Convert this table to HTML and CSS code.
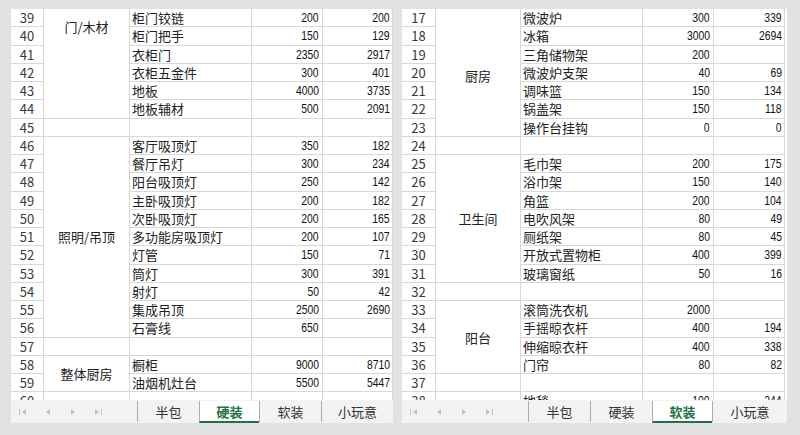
FILE: index.html
```html
<!DOCTYPE html>
<html lang="zh">
<head>
<meta charset="utf-8">
<title>装修预算</title>
<link rel="stylesheet" href="styles.css">
</head>
<body>
<div class="desk">
  <section class="panel panel-left">
    <div class="sheet">
      <div class="grid">
        <div class="c n">39</div><div class="c g span6 g-top">门/木材</div><div class="c i">柜门铰链</div><div class="c b"><span>200</span></div><div class="c a"><span>200</span></div>
        <div class="c n">40</div><div class="c i">柜门把手</div><div class="c b"><span>150</span></div><div class="c a"><span>129</span></div>
        <div class="c n">41</div><div class="c i">衣柜门</div><div class="c b"><span>2350</span></div><div class="c a"><span>2917</span></div>
        <div class="c n">42</div><div class="c i">衣柜五金件</div><div class="c b"><span>300</span></div><div class="c a"><span>401</span></div>
        <div class="c n">43</div><div class="c i">地板</div><div class="c b"><span>4000</span></div><div class="c a"><span>3735</span></div>
        <div class="c n">44</div><div class="c i">地板辅材</div><div class="c b"><span>500</span></div><div class="c a"><span>2091</span></div>
        <div class="c n">45</div><div class="c g"></div><div class="c i"></div><div class="c b"></div><div class="c a"></div>
        <div class="c n">46</div><div class="c g span11">照明/吊顶</div><div class="c i">客厅吸顶灯</div><div class="c b"><span>350</span></div><div class="c a"><span>182</span></div>
        <div class="c n">47</div><div class="c i">餐厅吊灯</div><div class="c b"><span>300</span></div><div class="c a"><span>234</span></div>
        <div class="c n">48</div><div class="c i">阳台吸顶灯</div><div class="c b"><span>250</span></div><div class="c a"><span>142</span></div>
        <div class="c n">49</div><div class="c i">主卧吸顶灯</div><div class="c b"><span>200</span></div><div class="c a"><span>182</span></div>
        <div class="c n">50</div><div class="c i">次卧吸顶灯</div><div class="c b"><span>200</span></div><div class="c a"><span>165</span></div>
        <div class="c n">51</div><div class="c i">多功能房吸顶灯</div><div class="c b"><span>200</span></div><div class="c a"><span>107</span></div>
        <div class="c n">52</div><div class="c i">灯管</div><div class="c b"><span>150</span></div><div class="c a"><span>71</span></div>
        <div class="c n">53</div><div class="c i">筒灯</div><div class="c b"><span>300</span></div><div class="c a"><span>391</span></div>
        <div class="c n">54</div><div class="c i">射灯</div><div class="c b"><span>50</span></div><div class="c a"><span>42</span></div>
        <div class="c n">55</div><div class="c i">集成吊顶</div><div class="c b"><span>2500</span></div><div class="c a"><span>2690</span></div>
        <div class="c n">56</div><div class="c i">石膏线</div><div class="c b"><span>650</span></div><div class="c a"></div>
        <div class="c n">57</div><div class="c g"></div><div class="c i"></div><div class="c b"></div><div class="c a"></div>
        <div class="c n">58</div><div class="c g span2">整体厨房</div><div class="c i">橱柜</div><div class="c b"><span>9000</span></div><div class="c a"><span>8710</span></div>
        <div class="c n">59</div><div class="c i">油烟机灶台</div><div class="c b"><span>5500</span></div><div class="c a"><span>5447</span></div>
        <div class="c n">60</div><div class="c g"></div><div class="c i"></div><div class="c b"></div><div class="c a"></div>
      </div>
    </div>
    <div class="tabs">
      <div class="nav">
        <svg class="arrow" viewBox="0 0 8 8"><rect x="0" y="1" width="1" height="6"/><path d="M7 1 L3 4 L7 7Z"/></svg>
        <svg class="arrow" viewBox="0 0 8 8"><path d="M6 1 L2 4 L6 7Z"/></svg>
        <svg class="arrow" viewBox="0 0 8 8"><path d="M2 1 L6 4 L2 7Z"/></svg>
        <svg class="arrow" viewBox="0 0 8 8"><path d="M1 1 L5 4 L1 7Z"/><rect x="7" y="1" width="1" height="6"/></svg>
      </div>
      <div class="tab">半包</div>
      <div class="tab tab-active">硬装</div>
      <div class="tab">软装</div>
      <div class="tab tab-last">小玩意</div>
    </div>
  </section>

  <section class="panel panel-right">
    <div class="sheet">
      <div class="grid">
        <div class="c n">17</div><div class="c g span7 g-low">厨房</div><div class="c i">微波炉</div><div class="c b"><span>300</span></div><div class="c a"><span>339</span></div>
        <div class="c n">18</div><div class="c i">冰箱</div><div class="c b"><span>3000</span></div><div class="c a"><span>2694</span></div>
        <div class="c n">19</div><div class="c i">三角储物架</div><div class="c b"><span>200</span></div><div class="c a"></div>
        <div class="c n">20</div><div class="c i">微波炉支架</div><div class="c b"><span>40</span></div><div class="c a"><span>69</span></div>
        <div class="c n">21</div><div class="c i">调味篮</div><div class="c b"><span>150</span></div><div class="c a"><span>134</span></div>
        <div class="c n">22</div><div class="c i">锅盖架</div><div class="c b"><span>150</span></div><div class="c a"><span>118</span></div>
        <div class="c n">23</div><div class="c i">操作台挂钩</div><div class="c b"><span>0</span></div><div class="c a"><span>0</span></div>
        <div class="c n">24</div><div class="c g"></div><div class="c i"></div><div class="c b"></div><div class="c a"></div>
        <div class="c n">25</div><div class="c g span7">卫生间</div><div class="c i">毛巾架</div><div class="c b"><span>200</span></div><div class="c a"><span>175</span></div>
        <div class="c n">26</div><div class="c i">浴巾架</div><div class="c b"><span>150</span></div><div class="c a"><span>140</span></div>
        <div class="c n">27</div><div class="c i">角篮</div><div class="c b"><span>200</span></div><div class="c a"><span>104</span></div>
        <div class="c n">28</div><div class="c i">电吹风架</div><div class="c b"><span>80</span></div><div class="c a"><span>49</span></div>
        <div class="c n">29</div><div class="c i">厕纸架</div><div class="c b"><span>80</span></div><div class="c a"><span>45</span></div>
        <div class="c n">30</div><div class="c i">开放式置物柜</div><div class="c b"><span>400</span></div><div class="c a"><span>399</span></div>
        <div class="c n">31</div><div class="c i">玻璃窗纸</div><div class="c b"><span>50</span></div><div class="c a"><span>16</span></div>
        <div class="c n">32</div><div class="c g"></div><div class="c i"></div><div class="c b"></div><div class="c a"></div>
        <div class="c n">33</div><div class="c g span4">阳台</div><div class="c i">滚筒洗衣机</div><div class="c b"><span>2000</span></div><div class="c a"></div>
        <div class="c n">34</div><div class="c i">手摇晾衣杆</div><div class="c b"><span>400</span></div><div class="c a"><span>194</span></div>
        <div class="c n">35</div><div class="c i">伸缩晾衣杆</div><div class="c b"><span>400</span></div><div class="c a"><span>338</span></div>
        <div class="c n">36</div><div class="c i">门帘</div><div class="c b"><span>80</span></div><div class="c a"><span>82</span></div>
        <div class="c n">37</div><div class="c g"></div><div class="c i"></div><div class="c b"></div><div class="c a"></div>
        <div class="c n">38</div><div class="c g"></div><div class="c i">地毯</div><div class="c b"><span>100</span></div><div class="c a"><span>244</span></div>
      </div>
    </div>
    <div class="tabs">
      <div class="nav">
        <svg class="arrow" viewBox="0 0 8 8"><rect x="0" y="1" width="1" height="6"/><path d="M7 1 L3 4 L7 7Z"/></svg>
        <svg class="arrow" viewBox="0 0 8 8"><path d="M6 1 L2 4 L6 7Z"/></svg>
        <svg class="arrow" viewBox="0 0 8 8"><path d="M2 1 L6 4 L2 7Z"/></svg>
        <svg class="arrow" viewBox="0 0 8 8"><path d="M1 1 L5 4 L1 7Z"/><rect x="7" y="1" width="1" height="6"/></svg>
      </div>
      <div class="tab">半包</div>
      <div class="tab">硬装</div>
      <div class="tab tab-active">软装</div>
      <div class="tab tab-last">小玩意</div>
    </div>
  </section>
</div>
</body>
</html>
```

FILE: styles.css
```css
html, body {
  margin: 0;
  padding: 0;
}

body {
  width: 800px;
  height: 435px;
  overflow: hidden;
  background: #e2e2e2;
  font-family: "Noto Sans CJK SC", "Noto Sans", sans-serif;
  color: #222;
}

.desk {
  display: flex;
  gap: 9px;
  padding: 9px 0 0 11px;
}

.panel {
  display: flex;
  flex-direction: column;
  background: #fff;
}

.panel-left { width: 382px; }
.panel-right { width: 385px; }

.sheet {
  height: 391px;
  overflow: hidden;
}

.grid {
  display: grid;
  grid-auto-rows: 18.25px;
}

.panel-left .grid { grid-template-columns: 33px 86px 122px 71px 70px; }
.panel-right .grid { grid-template-columns: 34px 85px 122px 71px 71px; }

.c {
  box-sizing: border-box;
  border-right: 1px solid #d8d8d8;
  border-bottom: 1px solid #d8d8d8;
  line-height: 17px;
  white-space: nowrap;
}

.n {
  grid-column: 1;
  text-align: center;
  font-size: 13px;
  color: #3a3a3a;
}

.g {
  grid-column: 2;
  display: flex;
  align-items: center;
  justify-content: center;
  font-size: 13px;
}

.g-top {
  align-items: flex-start;
  padding-top: 9px;
}

.g-low { padding-top: 7px; }

.span2 { grid-row: span 2; }
.span4 { grid-row: span 4; }
.span6 { grid-row: span 6; }
.span7 { grid-row: span 7; }
.span11 { grid-row: span 11; }

.i {
  grid-column: 3;
  padding-left: 2px;
  font-size: 13px;
}

.b, .a {
  text-align: right;
  font-family: "Liberation Sans", Arial, sans-serif;
  font-size: 13.5px;
  color: #111;
}

.b span, .a span {
  display: inline-block;
  transform: scaleX(0.77);
  transform-origin: right center;
}

.b { grid-column: 4; padding-right: 3px; }
.a { grid-column: 5; padding-right: 2px; }

.tabs {
  display: flex;
  height: 23px;
  background: #f3f3f3;
  box-sizing: border-box;
  padding-top: 1px;
}

.nav {
  width: 126px;
  display: flex;
  align-items: center;
  gap: 17px;
  padding-left: 8px;
  box-sizing: border-box;
}

.arrow {
  width: 8px;
  height: 8px;
  fill: #c2c2c2;
}

.tab {
  width: 62px;
  display: flex;
  align-items: center;
  justify-content: center;
  box-sizing: border-box;
  border-left: 1px solid #ababab;
  margin-bottom: 1px;
  font-size: 13px;
  color: #333;
}

.tab-active {
  width: 60px;
  background: #fff;
  color: #217346;
  font-weight: 700;
  border-bottom: 2px solid #217346;
  margin-bottom: 0;
}

.tab-last { flex: 1; }
```
